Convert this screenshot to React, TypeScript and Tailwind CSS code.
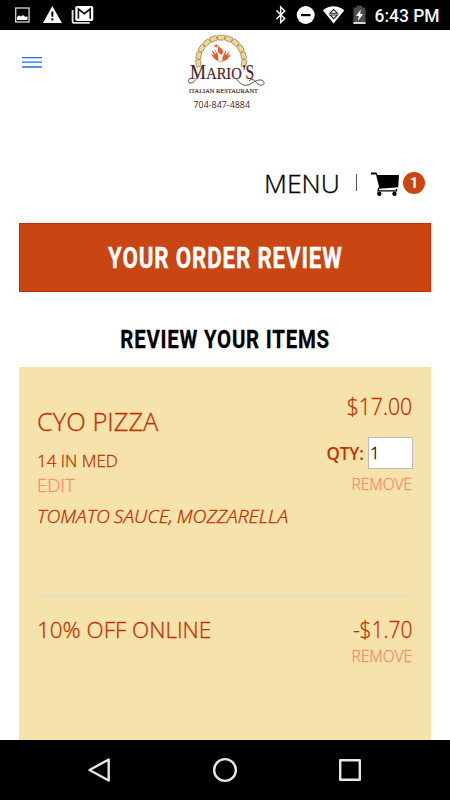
import React from 'react';

const StatusBar: React.FC = () => (
  <div className="flex h-[30px] shrink-0 bg-black">
    <svg width="450" height="30" viewBox="0 0 450 30">
      {/* screenshot, warning and mail notifications */}
      <rect x="15.7" y="8" width="13.4" height="14" fill="none" stroke="#d8d8d8" strokeWidth="1.3" />
      <path d="M17 20v-3l2-1.5 2 1 2-1.5 2 1.8 2.5-.3V20z" fill="#fff" />
      <path d="M52.3 6 62 23H43z" fill="#fff" />
      <path d="M51.4 11.5h1.9v5.2h-1.9zM51.4 18.3h1.9v2.2h-1.9z" fill="#000" />
      <path d="M72.6 10v11.2q0 1.7 1.7 1.7h15.5" fill="none" stroke="#e4e4e4" strokeWidth="1.8" />
      <rect x="75.3" y="6" width="18" height="15" rx="1.8" fill="#fff" />
      <path d="M78.4 18.8V9l5.9 4.7L90.2 9v9.8" fill="none" stroke="#111" strokeWidth="1.6" />
      {/* bluetooth */}
      <path d="M276.5 10.5l8.2 8-4 4V7l4 4-8.2 8" fill="none" stroke="#fff" strokeWidth="1.5" />
      {/* do not disturb */}
      <circle cx="305.7" cy="15" r="9" fill="#fff" />
      <rect x="301" y="14" width="9.5" height="2.2" fill="#000" />
      {/* wifi */}
      <path d="M322.8 10.3q10.7-8 21.6 0L333.6 23.5z" fill="#fff" />
      <path d="M330 13.2l3.7-3.7 3.7 3.7zM330 15h7.4l-3.7 3.7z" fill="#fff" stroke="#222" strokeWidth="1.1" />
      {/* battery */}
      <path d="M353.5 7.5h3V5.8h5.8v1.7h3.2V24h-12z" fill="#4d4d4d" />
      <path d="M353.5 22h12v2h-12z" fill="#d5d5d5" />
      <path d="M360.8 9.5l-4.8 6.5h2.8l-.8 5 5-7h-2.8z" fill="#fff" />
      <text x="374.5" y="22.3" fill="#f5f5f5" fontFamily="Roboto, sans-serif" fontWeight="500" fontSize="18" textLength="65" lengthAdjust="spacingAndGlyphs">
        6:43 PM
      </text>
    </svg>
  </div>
);

const archStones = [-97, -77.6, -58.2, -38.8, -19.4, 0, 19.4, 38.8, 58.2, 77.6, 97];

const Logo: React.FC = () => (
  <svg width="90" height="80" viewBox="0 0 90 80">
    {archStones.map(angle => (
      <rect
        key={angle}
        x="36.6"
        y="5.2"
        width="7"
        height="4.8"
        rx=".8"
        fill="#f0d68f"
        stroke="#94754c"
        strokeWidth=".7"
        transform={`rotate(${angle} 40.1 30.5)`}
      />
    ))}
    <g fill="#e25c32">
      <path d="M37.5 31c-4-1-5.3-4-8-7.5l3.5 2-2.7-6 4.7 5-1-5.500 3 6 .5 6z" />
      <path d="M39.5 24.5c-4.5-3-2-6-2.2-9.500 1 2.500 1.700 2.500 3 3.500 2 1.500 2.200 3.500 1 6z" />
      <path d="M41 31l.7-4.500 3.300-6.500-.3 5.200 4-4.500-2 5 3.300-1.500c-2 3-3.500 6.300-8 6.800z" />
      <path d="M35.5 17.500l-2.500-1.500.8-1.500 1.200 1 1-2 .5 3z" />
    </g>
    <path d="M36.5 30.5q3.5 2 7 0" fill="none" stroke="#f0a27c" strokeWidth="1.2" />
    <g fill="#4a241c" stroke="#4a241c" strokeWidth=".2" fontFamily="'Liberation Serif', serif">
      <text x="9" y="49" fontSize="20" textLength="16" lengthAdjust="spacingAndGlyphs">M</text>
      <text x="25.2" y="49" fontSize="16" textLength="35.5" lengthAdjust="spacingAndGlyphs">ARIO</text>
      <text x="61.8" y="49" fontSize="20" textLength="11.5" lengthAdjust="spacingAndGlyphs">'S</text>
    </g>
    <text x="8" y="62.5" fill="#4a241c" stroke="#4a241c" strokeWidth=".15" fontFamily="'Liberation Serif', serif" fontSize="6.5" textLength="69" lengthAdjust="spacing">
      ITALIAN RESTAURANT
    </text>
    <text x="12.5" y="77.5" fill="#4a241c" fontFamily="'Open Sans', sans-serif" fontSize="9.5" textLength="56.5" lengthAdjust="spacingAndGlyphs">
      704-847-4884
    </text>
    <path
      d="M11 48c-4 .2-5 4.500-2 5s5-2.500 7-5M55 48c3 5 7 8.500 12 7 5-1.800 8-5.500 13-5 4 .8 4 5 .5 5.200-3 .2-4.500-2-7-4.700-2-1.800-4.500-1-5.500.5"
      fill="none"
      stroke="#6b4537"
      strokeWidth="1"
    />
  </svg>
);

const Cart: React.FC = () => (
  <svg width="28" height="25" viewBox="0 0 28 25">
    <path d="M0 .5h5.5l1 2.5H28l-.8 12.2L8.5 16.7 5 2.4H0z" fill="#000" />
    <path d="M8 15.5 7 18.9h18.5v-2" fill="none" stroke="#000" strokeWidth="1.3" />
    <circle cx="8.3" cy="21.8" r="2.2" />
    <circle cx="23.5" cy="21.8" r="2.2" />
  </svg>
);

const MenuButton: React.FC = () => (
  <svg className="ml-[22px] mt-[26px]" width="20" height="13" viewBox="0 0 20 13" stroke="#1a6dff" strokeWidth="1.3">
    <path d="M0 1.6h20M0 6.200h20M0 11h20" />
  </svg>
);

const Header: React.FC = () => (
  <div className="h-[193px] shrink-0">
    <div className="flex items-start h-[130px]">
      <MenuButton />
      <div className="ml-[139px]">
        <Logo />
      </div>
    </div>
    <div className="flex items-center h-[46px] pl-[264px] text-black">
      <span className="w-[92px] text-[26px] font-light whitespace-nowrap origin-left scale-x-[1.02] [-webkit-text-stroke:.35px]">MENU</span>
      <div className="w-px h-[17px] mt-[-2px] bg-[#555]" />
      <div className="ml-[14px] mt-[2px]">
        <Cart />
      </div>
      <div className="ml-[4px] mt-[-1px] w-[22px] h-[22px] rounded-full bg-[#c94512] text-white text-[15px] font-bold leading-[22px] text-center font-['Roboto',sans-serif]">
        1
      </div>
    </div>
  </div>
);

const OrderCard: React.FC = () => (
  <div className="mx-[19px] pl-[18px] pr-[19px] pt-[23px] flex-1 bg-[#f5e3ab] text-[#c63000] font-light [-webkit-text-stroke:.3px]">
    <div className="flex justify-between h-[207px] border-b-2 border-[#e4dfcf]">
      <div className="pt-[14px] whitespace-nowrap">
        <div className="h-[34px] leading-[34px] text-[25px] origin-left scale-x-[1.02]">CYO PIZZA</div>
        <div className="mt-[11px] h-6 leading-6 text-[17px]">14 IN MED</div>
        <div className="h-6 leading-6 text-[17.5px] origin-left scale-x-[1.06] text-[#fa8d6c]">EDIT</div>
        <div className="mt-[7px] h-6 leading-6 w-0 text-[17.5px] [word-spacing:-1px] italic origin-left scale-x-[1.1]">TOMATO SAUCE, MOZZARELLA</div>
      </div>
      <div className="flex flex-col items-end whitespace-nowrap">
        <div className="h-[30px] leading-[32px] text-[23px] origin-right scale-x-[.92]">$17.00</div>
        <div className="mt-[17px] mr-[-1px] flex items-center gap-[4px]">
          <span className="text-[18px] font-semibold origin-right scale-x-[.94] [-webkit-text-stroke:0]">QTY:</span>
          <div className="w-[45px] h-8 border border-[#bbb] bg-white pl-px leading-[30px] text-[17px] text-black">1</div>
        </div>
        <div className="mt-[3px] h-6 leading-[25px] text-[15.5px] text-[#fa8d6c]">REMOVE</div>
      </div>
    </div>
    <div className="flex justify-between pt-[17px]">
      <div className="h-[30px] leading-[30px] text-[22px] origin-left scale-x-[1.02]">10% OFF ONLINE</div>
      <div className="flex flex-col items-end">
        <div className="h-[30px] leading-[30px] text-[23px] origin-right scale-x-[.91]">-$1.70</div>
        <div className="h-6 leading-6 text-[15.5px] text-[#fa8d6c]">REMOVE</div>
      </div>
    </div>
  </div>
);

const NavBar: React.FC = () => (
  <div className="h-[60px] shrink-0 bg-black">
    <svg width="450" height="60" viewBox="0 0 450 60" fill="none" stroke="#e6e6e6" strokeWidth="2.4" strokeLinejoin="round">
      <path d="M108.7 19.5v21L89.5 30z" />
      <circle cx="225" cy="30" r="10.9" />
      <rect x="340.2" y="20.2" width="19.6" height="19.6" />
    </svg>
  </div>
);

export default function App() {
  return (
    <div className="w-[450px] h-[800px] flex flex-col overflow-hidden bg-white font-['Open_Sans',sans-serif]">
      <StatusBar />
      <Header />
      <div className="mx-[19px] h-[69px] shrink-0 border border-[#cc2a00] bg-[#c94512] text-center text-white text-[29px] leading-[68px] font-bold font-['Roboto',sans-serif]">
        <span className="inline-block scale-x-[.77] tracking-[1.1px] [-webkit-text-stroke:.4px]">YOUR ORDER REVIEW</span>
      </div>
      <div className="h-[75px] shrink-0 pt-[9px] text-center text-black text-[26.5px] leading-[75px] font-bold font-['Roboto',sans-serif]">
        <span className="inline-block scale-x-[.77] tracking-[1px] [-webkit-text-stroke:.3px]">REVIEW YOUR ITEMS</span>
      </div>
      <OrderCard />
      <NavBar />
    </div>
  );
}
